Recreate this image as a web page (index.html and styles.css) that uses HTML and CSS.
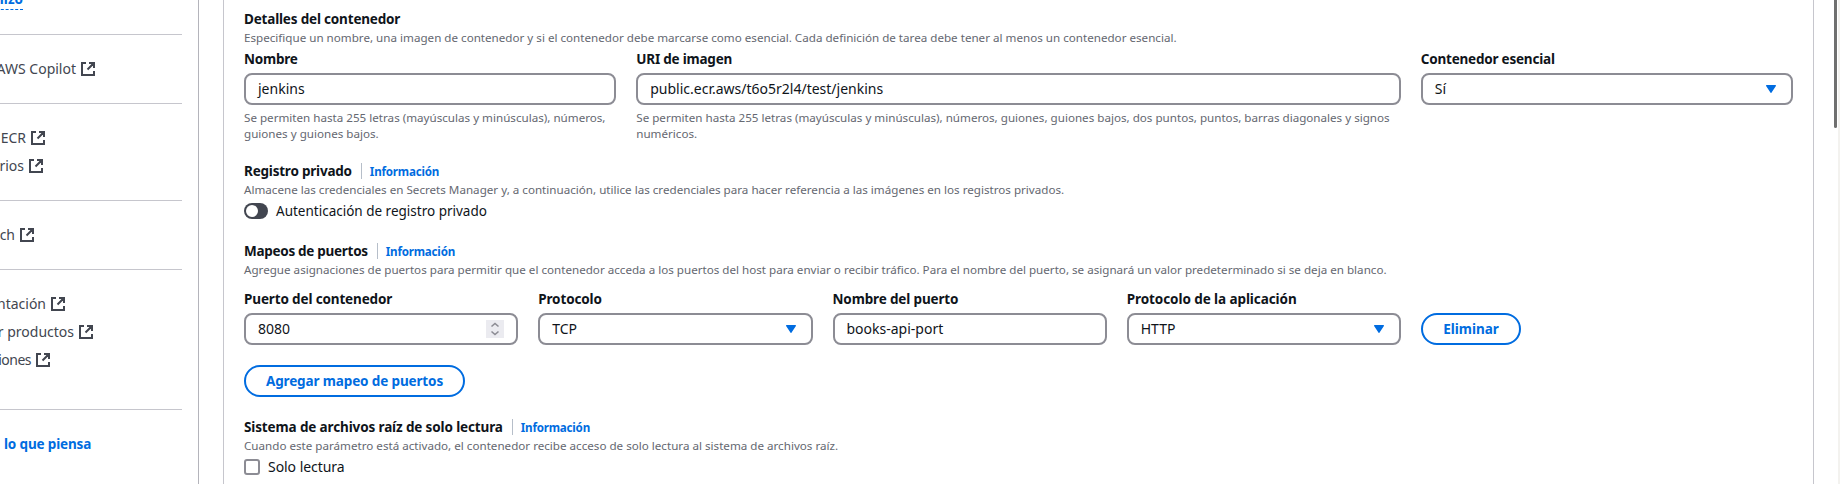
FILE: index.html
```html
<!DOCTYPE html>
<html lang="es">
<head>
<meta charset="utf-8">
<title>Detalles del contenedor</title>
<link rel="stylesheet" href="styles.css">
</head>
<body>
<svg class="sprite" aria-hidden="true">
  <symbol id="external" viewBox="0 0 14 14"><path d="M5 1H1v12h12V9M8 1h5v5M12.500 1.500 6.500 7.500" fill="none" stroke="currentColor" stroke-width="2"/><path d="M9.500 1.500h3v3z" fill="currentColor"/></symbol>
  <symbol id="caret" viewBox="0 0 10 8"><path d="M.6 0h8.8c.5 0 .8.6.5 1L5.6 7.6a.7.7 0 0 1-1.200 0L.1 1C-.2.6.1 0 .6 0z" fill="currentColor"/></symbol>
</svg>
<div class="app">
  <nav class="sidebar">
    <div class="nav-row"><a class="nav-new">ilizó</a></div>
    <hr>
    <a class="nav-link w-copilot"><span>AWS Copilot</span><svg><use href="#external"/></svg></a>
    <hr>
    <a class="nav-link w-ecr"><span>ECR</span><svg><use href="#external"/></svg></a>
    <a class="nav-link w-repos"><span>orios</span><svg><use href="#external"/></svg></a>
    <hr>
    <a class="nav-link w-batch"><span>ch</span><svg><use href="#external"/></svg></a>
    <hr>
    <a class="nav-link w-docs"><span>ntación</span><svg><use href="#external"/></svg></a>
    <a class="nav-link w-products"><span>r productos</span><svg><use href="#external"/></svg></a>
    <a class="nav-link w-subs"><span>iones</span><svg><use href="#external"/></svg></a>
    <hr class="last">
    <a class="feedback">lo que piensa</a>
  </nav>
  <main class="main">
    <div class="card">
      <section>
        <h2 class="t-details">Detalles del contenedor</h2>
        <p class="hint">Especifique un nombre, una imagen de contenedor y si el contenedor debe marcarse como esencial. Cada definición de tarea debe tener al menos un contenedor esencial.</p>
        <div class="grid grid-details">
          <div class="field">
            <label>Nombre</label>
            <div class="input"><span>jenkins</span></div>
            <p class="hint">Se permiten hasta 255 letras (mayúsculas y minúsculas), números,<br>guiones y guiones bajos.</p>
          </div>
          <div class="field">
            <label>URI de imagen</label>
            <div class="input"><span>public.ecr.aws/t6o5r2l4/test/jenkins</span></div>
            <p class="hint">Se permiten hasta 255 letras (mayúsculas y minúsculas), números, guiones, guiones bajos, dos puntos, puntos, barras diagonales y signos<br>numéricos.</p>
          </div>
          <div class="field">
            <label>Contenedor esencial</label>
            <div class="input select"><span>Sí</span><svg><use href="#caret"/></svg></div>
          </div>
        </div>
      </section>
      <section>
        <div class="head"><h2>Registro privado</h2><a class="info"><span>Información</span></a></div>
        <p class="hint">Almacene las credenciales en Secrets Manager y, a continuación, utilice las credenciales para hacer referencia a las imágenes en los registros privados.</p>
        <div class="control"><span class="toggle"></span><span class="toggle-label">Autenticación de registro privado</span></div>
      </section>
      <section>
        <div class="head"><h2 class="t-ports">Mapeos de puertos</h2><a class="info"><span>Información</span></a></div>
        <p class="hint">Agregue asignaciones de puertos para permitir que el contenedor acceda a los puertos del host para enviar o recibir tráfico. Para el nombre del puerto, se asignará un valor predeterminado si se deja en blanco.</p>
        <div class="grid grid-ports">
          <div class="field">
            <label>Puerto del contenedor</label>
            <div class="input number"><span>8080</span><span class="spinner"><svg viewBox="0 0 18 18"><path d="m5.500 6.500 3.500-3 3.500 3M5.500 11.500l3.500 3 3.500-3" fill="none" stroke="currentColor" stroke-width="1.600"/></svg></span></div>
          </div>
          <div class="field">
            <label>Protocolo</label>
            <div class="input select"><span>TCP</span><svg><use href="#caret"/></svg></div>
          </div>
          <div class="field">
            <label>Nombre del puerto</label>
            <div class="input"><span>books-api-port</span></div>
          </div>
          <div class="field">
            <label class="l-app">Protocolo de la aplicación</label>
            <div class="input select"><span>HTTP</span><svg><use href="#caret"/></svg></div>
          </div>
          <button class="btn btn-remove">Eliminar</button>
        </div>
        <button class="btn btn-add">Agregar mapeo de puertos</button>
      </section>
      <section>
        <div class="head"><h2 class="t-fs">Sistema de archivos raíz de solo lectura</h2><a class="info"><span>Información</span></a></div>
        <p class="hint">Cuando este parámetro está activado, el contenedor recibe acceso de solo lectura al sistema de archivos raíz.</p>
        <div class="control"><span class="checkbox"></span><span class="check-label">Solo lectura</span></div>
      </section>
    </div>
  </main>
  <div class="scroll"><div class="thumb"></div></div>
  <div class="edge"></div>
</div>
</body>
</html>
```
FILE: styles.css
```css
* { box-sizing: border-box; }
html { height: 484px; overflow: hidden; }
body { margin: 0; height: 484px; overflow: hidden; background: #fff; color: #0f141a; font: 14px/20px "Noto Sans", "Open Sans", sans-serif; }
h2, p { margin: 0; }
.sprite { display: none; }
.app { display: flex; height: 484px; overflow: hidden; }

.sidebar { width: 199px; flex: none; border-right: 1px solid #b4b4bb; padding-right: 16px; overflow: hidden; color: #424650; display: flex; flex-direction: column; }
.sidebar hr { width: 100%; flex: none; height: 1px; margin: 24px 0; border: 0; background: #c6c6cd; }
.sidebar hr.last { margin-top: 39px; }
.nav-row { height: 10px; flex: none; width: 23px; display: flex; justify-content: flex-end; align-items: flex-end; }
.nav-new { color: #006ce0; font-size: 13.5px; font-weight: 700; line-height: 20px; height: 21px; border-bottom: 1px dashed #006ce0; }
.nav-link { display: flex; flex: none; height: 20px; align-items: center; justify-content: flex-end; gap: 5px; white-space: nowrap; }
.nav-link + .nav-link { margin-top: 8px; }
.nav-link svg { width: 14px; height: 14px; flex: none; }
.w-copilot { width: 95px; }
.w-ecr { width: 45px; }
.w-repos { width: 43px; }
.w-batch { width: 34px; }
.w-docs { width: 65px; }
.w-products { width: 93px; }
.w-subs { width: 50px; letter-spacing: -.5px; }
.feedback { color: #006ce0; font-size: 13.5px; font-weight: 700; letter-spacing: -.15px; padding-left: 4px; white-space: nowrap; }

.main { flex: 1; padding: 0 20px 0 24px; }
.card { height: 484px; border: solid #c6c6cd; border-width: 0 1px; padding: 9px 20px 0; display: flex; flex-direction: column; gap: 20px; }
h2, label { font-size: 13.5px; line-height: 20px; font-weight: 700; letter-spacing: -.21px; white-space: nowrap; }
.t-details { letter-spacing: -.18px; }
.t-ports { letter-spacing: -.29px; }
.t-fs { letter-spacing: -.13px; }
.grid-ports label { letter-spacing: -.14px; }
.grid-ports .l-app { letter-spacing: -.08px; }
.hint { font-size: 11.64px; line-height: 16px; color: #656871; white-space: nowrap; padding-top: 1px; margin-bottom: -1px; }
.head { display: flex; align-items: center; }
.info { display: block; height: 16px; margin-left: 9px; padding: 1px 0 0 8px; border-left: 1px solid #b6bec9; font-size: 11.6px; line-height: 16px; letter-spacing: -.2px; font-weight: 700; color: #006ce0; }
.grid { display: grid; column-gap: 20px; }
.grid-details { grid-template-columns: 1fr calc(50% - 10px) 1fr; margin-top: 4px; }
.grid-ports { grid-template-columns: repeat(4, 274.25px) 1fr; margin: 12px 0 20px; align-items: end; }
.field { display: flex; flex-direction: column; gap: 4px; min-width: 0; }
.input { height: 32px; border: 2px solid #8c8c94; border-radius: 8px; padding: 0 12px; display: flex; align-items: center; white-space: nowrap; }
.select, .number { justify-content: space-between; }
.select { padding-right: 15px; }
.select svg { width: 10px; height: 8px; color: #006ce0; }
.spinner { width: 18px; height: 18px; background: #ebebf0; color: #8c8c94; }
.spinner svg { display: block; }
.btn { height: 32px; border: 2px solid #006ce0; border-radius: 20px; background: #fff; color: #006ce0; font: 700 13.5px/20px "Noto Sans", sans-serif; padding: 0; display: block; white-space: nowrap; }
.btn-remove { width: 100px; }
.btn-add { width: 221px; letter-spacing: -.13px; }
.control { display: flex; align-items: center; gap: 8px; height: 20px; margin-top: 4px; white-space: nowrap; }
.toggle-label { font-size: 13.5px; }
.check-label { letter-spacing: -.05px; }
.toggle { width: 24px; height: 16px; border-radius: 8px; background: #424650; padding: 2px; }
.toggle::before { content: ""; display: block; width: 12px; height: 12px; border-radius: 50%; background: #fff; }
.checkbox { width: 16px; height: 16px; border: 2px solid #8c8c94; border-radius: 3px; }

.scroll { width: 4px; flex: none; }
.thumb { width: 3px; height: 128px; background: #6f6f6f; border-radius: 0 0 2px 2px; }
.edge { width: 2px; flex: none; background: #f3f2ef; }
```
